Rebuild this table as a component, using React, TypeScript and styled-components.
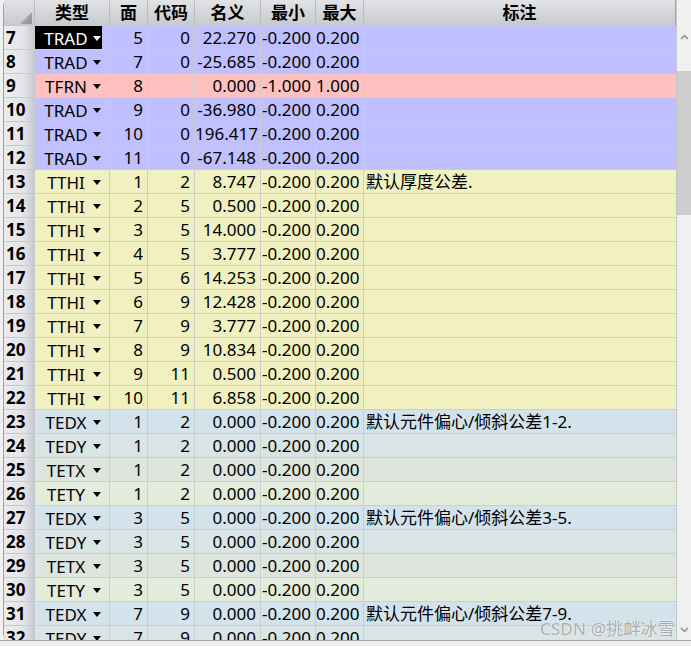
import React from "react";
import styled, { createGlobalStyle, css } from "styled-components";

const GlobalStyle = createGlobalStyle`
  html, body { margin: 0; padding: 0; background: #f0f0f0; }
  body { font-family: "Noto Sans", "Noto Sans CJK SC", sans-serif; }
`;

type Row = {
  n: number;
  t: string;
  f: string;
  c: string;
  v: string;
  min: string;
  max: string;
  note?: string;
  sel?: boolean;
};

const typeColors: Record<string, string> = {
  TRAD: "#c0c0ff",
  TFRN: "#ffc0c0",
  TTHI: "#f0f0c0",
  TEDX: "#d4e3eb",
  TEDY: "#d9e4e5",
  TETX: "#dde5de",
  TETY: "#e3ebda",
};

const rows: Row[] = [
  { n: 7, t: "TRAD", f: "5", c: "0", v: "22.270", min: "-0.200", max: "0.200", sel: true },
  { n: 8, t: "TRAD", f: "7", c: "0", v: "-25.685", min: "-0.200", max: "0.200" },
  { n: 9, t: "TFRN", f: "8", c: "", v: "0.000", min: "-1.000", max: "1.000" },
  { n: 10, t: "TRAD", f: "9", c: "0", v: "-36.980", min: "-0.200", max: "0.200" },
  { n: 11, t: "TRAD", f: "10", c: "0", v: "196.417", min: "-0.200", max: "0.200" },
  { n: 12, t: "TRAD", f: "11", c: "0", v: "-67.148", min: "-0.200", max: "0.200" },
  { n: 13, t: "TTHI", f: "1", c: "2", v: "8.747", min: "-0.200", max: "0.200", note: "默认厚度公差." },
  { n: 14, t: "TTHI", f: "2", c: "5", v: "0.500", min: "-0.200", max: "0.200" },
  { n: 15, t: "TTHI", f: "3", c: "5", v: "14.000", min: "-0.200", max: "0.200" },
  { n: 16, t: "TTHI", f: "4", c: "5", v: "3.777", min: "-0.200", max: "0.200" },
  { n: 17, t: "TTHI", f: "5", c: "6", v: "14.253", min: "-0.200", max: "0.200" },
  { n: 18, t: "TTHI", f: "6", c: "9", v: "12.428", min: "-0.200", max: "0.200" },
  { n: 19, t: "TTHI", f: "7", c: "9", v: "3.777", min: "-0.200", max: "0.200" },
  { n: 20, t: "TTHI", f: "8", c: "9", v: "10.834", min: "-0.200", max: "0.200" },
  { n: 21, t: "TTHI", f: "9", c: "11", v: "0.500", min: "-0.200", max: "0.200" },
  { n: 22, t: "TTHI", f: "10", c: "11", v: "6.858", min: "-0.200", max: "0.200" },
  { n: 23, t: "TEDX", f: "1", c: "2", v: "0.000", min: "-0.200", max: "0.200", note: "默认元件偏心/倾斜公差1-2." },
  { n: 24, t: "TEDY", f: "1", c: "2", v: "0.000", min: "-0.200", max: "0.200" },
  { n: 25, t: "TETX", f: "1", c: "2", v: "0.000", min: "-0.200", max: "0.200" },
  { n: 26, t: "TETY", f: "1", c: "2", v: "0.000", min: "-0.200", max: "0.200" },
  { n: 27, t: "TEDX", f: "3", c: "5", v: "0.000", min: "-0.200", max: "0.200", note: "默认元件偏心/倾斜公差3-5." },
  { n: 28, t: "TEDY", f: "3", c: "5", v: "0.000", min: "-0.200", max: "0.200" },
  { n: 29, t: "TETX", f: "3", c: "5", v: "0.000", min: "-0.200", max: "0.200" },
  { n: 30, t: "TETY", f: "3", c: "5", v: "0.000", min: "-0.200", max: "0.200" },
  { n: 31, t: "TEDX", f: "7", c: "9", v: "0.000", min: "-0.200", max: "0.200", note: "默认元件偏心/倾斜公差7-9." },
  { n: 32, t: "TEDY", f: "7", c: "9", v: "0.000", min: "-0.200", max: "0.200" },
];

const Frame = styled.div`
  position: relative;
  width: 691px;
  height: 646px;
  background: #f0f0f0;
  display: flex;
  flex-direction: column;
  overflow: hidden;
`;

const Body = styled.div`
  display: flex;
  height: 640px;
  border-bottom: 1px solid #a9a9a9;
  box-sizing: content-box;
`;

const Sheet = styled.div`
  margin-left: 3px;
  width: 674px;
  box-sizing: border-box;
  border-left: 1px solid #a0a0a0;
  border-right: 1px solid #c4c6c9;
  border-radius: 6px 0 0 6px;
  overflow: hidden;
  background: #ffffff;
`;

const Grid = styled.div`
  display: grid;
  grid-template-columns: 31px 75px 38px 47px 66px 55px 48px 1fr;
  grid-template-rows: 26px;
  grid-auto-rows: 24px;
  font-family: "Noto Sans", "Noto Sans CJK SC", sans-serif;
  font-size: 17px;
  color: #000;
`;

const HeadCell = styled.div<{ $last?: boolean }>`
  box-sizing: border-box;
  background: linear-gradient(#e1e3e6, #c7c9cc);
  border-right: 1px solid ${(p) => (p.$last ? "#a4a7ab" : "#b9bcc0")};
  font-weight: 700;
  display: flex;
  align-items: center;
  justify-content: center;
  line-height: 26px;
  white-space: nowrap;
`;

const Corner = styled(HeadCell)`
  justify-content: flex-end;
  align-items: flex-end;
  padding: 0 2px 2px 0;
`;

const RowHead = styled.div`
  box-sizing: border-box;
  background: linear-gradient(to right, #ebecee 0%, #e3e4e7 65%, #c3c7cc 100%);
  border-bottom: 1px solid #c9cbce;
  font-weight: 700;
  line-height: 23px;
  padding-left: 2px;
`;

const Cell = styled.div<{ $bg: string; $align?: "left" | "right"; $last?: boolean }>`
  box-sizing: border-box;
  background: ${(p) => p.$bg};
  border-bottom: 1px solid #cdcdcd;
  border-right: ${(p) => (p.$last ? "none" : "1px solid #cdcdcd")};
  line-height: 24px;
  white-space: nowrap;
  overflow: hidden;
  text-align: ${(p) => p.$align ?? "right"};
  padding: ${(p) => (p.$align === "left" ? "0 0 0 2px" : "0 4px 0 0")};
`;

const TypeCell = styled.div<{ $bg: string }>`
  box-sizing: border-box;
  background: ${(p) => p.$bg};
  border-bottom: 1px solid #cdcdcd;
  border-right: 1px solid #cdcdcd;
  display: flex;
  height: 24px;
`;

const Selector = styled.div<{ $sel?: boolean }>`
  width: 67px;
  height: 23px;
  box-sizing: border-box;
  display: flex;
  align-items: center;
  padding: 1px 1px 0 5px;
  line-height: 23px;
  ${(p) =>
    p.$sel &&
    css`
      background: #000;
      color: #fff;
    `}
`;

const SelectorText = styled.span`
  flex: 1;
  text-align: center;
`;

const Caret = styled.svg`
  width: 8px;
  height: 5px;
  margin-left: 1px;
  flex: none;
`;

const Scrollbar = styled.div`
  width: 14px;
  display: flex;
  flex-direction: column;
  align-items: stretch;
  background: #f0f0f0;
`;

const ArrowBox = styled.div<{ $top: number }>`
  height: 14px;
  margin-top: ${(p) => p.$top}px;
  display: flex;
  align-items: center;
  justify-content: center;
`;

const Thumb = styled.div`
  margin-top: 27px;
  height: 144px;
  background: #cdcdcd;
`;

const Spacer = styled.div`
  flex: 1;
`;

const Tail = styled.div`
  height: 3px;
`;

const Watermark = styled.div`
  position: absolute;
  right: 16px;
  bottom: 6px;
  font-family: "Noto Sans", "Noto Sans CJK SC", sans-serif;
  font-size: 17px;
  color: rgba(150, 150, 150, 0.75);
  text-shadow: 0 0 2px rgba(255, 255, 255, 0.9);
  letter-spacing: 0.2px;
  pointer-events: none;
`;

const Chevron = ({ up }: { up?: boolean }) => (
  <svg width="9" height="6" viewBox="0 0 9 6">
    <polyline
      points={up ? "1,5 4.5,1.5 8,5" : "1,1 4.5,4.5 8,1"}
      fill="none"
      stroke="#8a8a8a"
      strokeWidth="1.4"
    />
  </svg>
);

export default function App() {
  const heads = ["类型", "面", "代码", "名义", "最小", "最大", "标注"];
  return (
    <>
      <GlobalStyle />
      <Frame>
        <Body>
          <Sheet>
            <Grid>
              <Corner>
                <svg width="12" height="12" viewBox="0 0 12 12">
                  <defs>
                    <linearGradient id="cg" x1="0" y1="0" x2="1" y2="1">
                      <stop offset="0" stopColor="#b4b6b9" />
                      <stop offset="1" stopColor="#8f9296" />
                    </linearGradient>
                  </defs>
                  <polygon points="12,0 12,12 0,12" fill="url(#cg)" />
                </svg>
              </Corner>
              {heads.map((h, i) => (
                <HeadCell key={h} $last={i === heads.length - 1}>
                  {h}
                </HeadCell>
              ))}
              {rows.map((r) => {
                const bg = typeColors[r.t];
                return (
                  <React.Fragment key={r.n}>
                    <RowHead>{r.n}</RowHead>
                    <TypeCell $bg={bg}>
                      <Selector $sel={r.sel}>
                        <SelectorText>{r.t}</SelectorText>
                        <Caret viewBox="0 0 8 5">
                          <polygon points="0,0 8,0 4,5" fill={r.sel ? "#fff" : "#000"} />
                        </Caret>
                      </Selector>
                    </TypeCell>
                    <Cell $bg={bg}>{r.f}</Cell>
                    <Cell $bg={bg}>{r.c}</Cell>
                    <Cell $bg={bg}>{r.v}</Cell>
                    <Cell $bg={bg}>{r.min}</Cell>
                    <Cell $bg={bg}>{r.max}</Cell>
                    <Cell $bg={bg} $align="left" $last>
                      {r.note ?? ""}
                    </Cell>
                  </React.Fragment>
                );
              })}
            </Grid>
          </Sheet>
          <Scrollbar>
            <ArrowBox $top={30}>
              <Chevron up />
            </ArrowBox>
            <Thumb />
            <Spacer />
            <ArrowBox $top={0}>
              <Chevron />
            </ArrowBox>
            <Tail />
          </Scrollbar>
        </Body>
        <Watermark>CSDN @挑衅冰雪</Watermark>
      </Frame>
    </>
  );
}
